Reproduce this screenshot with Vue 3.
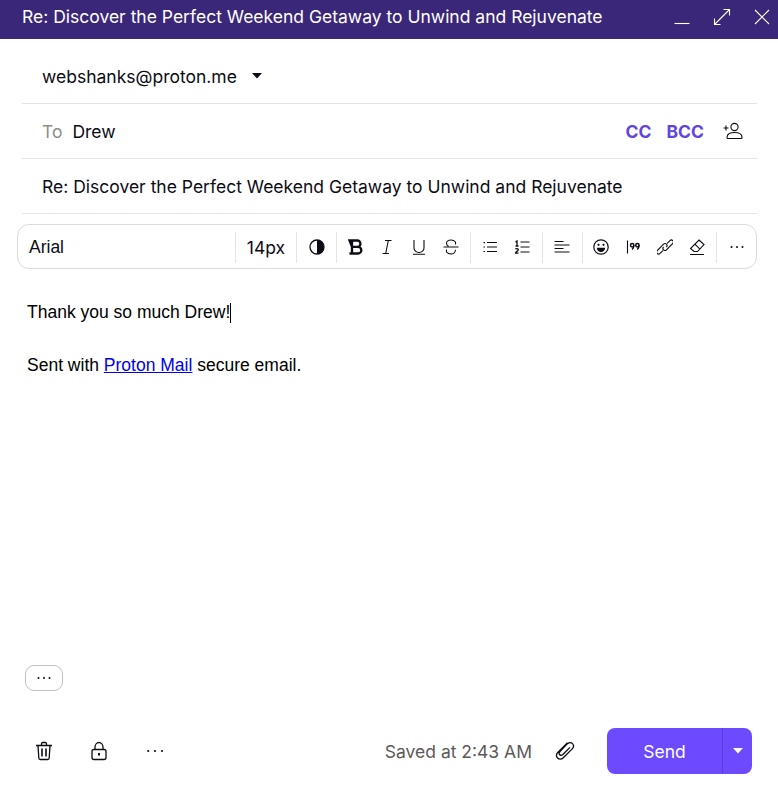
<script setup>
const groups = [
  ['bold', 'italic', 'underline', 'strike'],
  ['bullets', 'numbers'],
  ['align'],
  ['emoji', 'quote', 'link', 'eraser']
]
</script>

<template>
  <div class="composer">
    <header class="titlebar">
      <span class="title">Re: Discover the Perfect Weekend Getaway to Unwind and Rejuvenate</span>
      <div class="window-btns">
        <svg width="18" height="18" viewBox="0 0 18 18"><path d="M1.500 15.500h15" stroke="#fff" stroke-width="1.100" fill="none"/></svg>
        <svg width="18" height="18" viewBox="0 0 18 18" fill="none" stroke="#fff" stroke-width="1.100"><path d="M1.500 16.500 16.500 1.500M10.500 1.500h6v6M1.500 10.500v6h6"/></svg>
        <svg width="18" height="18" viewBox="0 0 18 18" fill="none" stroke="#fff" stroke-width="1.100"><path d="M2 2l14 14M16 2 2 16"/></svg>
      </div>
    </header>

    <div class="fields">
      <div class="row from">
        <span>webshanks@proton.me</span>
        <svg class="caret-down" width="10" height="6" viewBox="0 0 10 6"><path d="M0 0h10L5 5.500z" fill="#0c0c14"/></svg>
      </div>
      <div class="row to">
        <span class="to-label">To</span>
        <span>Drew</span>
        <span class="cc">CC</span>
        <span class="cc bcc">BCC</span>
        <svg class="add-contact" width="20" height="18" viewBox="0 0 20 18" fill="none" stroke="#0c0c14" stroke-width="1.100"><circle cx="11.500" cy="5" r="3.600"/><path d="M4 15.500c0-4 3.500-5 7.500-5s7.500 1 7.500 5c0 .6-.4 1-1 1H5c-.6 0-1-.4-1-1zM.5 6h5M3 3.500v5"/></svg>
      </div>
      <div class="row subject">Re: Discover the Perfect Weekend Getaway to Unwind and Rejuvenate</div>
    </div>

    <div class="toolbar">
      <div class="font-name">Arial</div>
      <div class="font-size">14px</div>
      <div class="contrast">
        <svg width="16" height="16" viewBox="0 0 16 16"><circle cx="8" cy="8" r="7" fill="none" stroke="#0c0c14" stroke-width="1.300"/><path d="M8 1a7 7 0 0 1 0 14z" fill="#0c0c14"/></svg>
      </div>
      <div v-for="(group, i) in groups" :key="i" class="tool-group" :class="{ wide: group.length < 3 }">
        <div v-for="name in group" :key="name" class="tool">
          <svg width="16" height="16" viewBox="0 0 16 16" fill="none" stroke="#0c0c14" stroke-width="1">
            <path v-if="name === 'bold'" stroke-width="2.300" transform="translate(1 0)" d="M1.500 1.500h7.800a3.100 3.100 0 0 1 0 6.300H4zM4 7.800h6a3.300 3.300 0 0 1 0 6.700H1.500M4 1.500v13"/>
            <path v-else-if="name === 'italic'" stroke-width="1.100" d="M6 1.500h6.500M3.500 14.500H10M9.300 1.500 6.700 14.500"/>
            <path v-else-if="name === 'underline'" stroke-width="1.100" d="M3 1v8a5 4.500 0 0 0 10 0V1M2 15.300h12"/>
            <path v-else-if="name === 'strike'" stroke-width="1.100" d="M12.500 5.500V3C11.500 1.800 9.800 1 8 1 5.500 1 3.500 2.300 3.500 4.300c0 1.300.8 2.300 2 2.900M.5 8h15M12.500 10.800c0 2.400-2 4.200-4.500 4.200-2 0-3.500-.8-4.500-2v-2.500"/>
            <g v-else-if="name === 'bullets'">
              <path d="M5 3.500h10M5 8h10M5 12.500h10"/>
              <path d="M1.500 3h1.500v1.200H1.500zM1.500 7.400h1.500v1.200H1.500zM1.500 11.900h1.500v1.200H1.500z" fill="#0c0c14" stroke="none"/>
            </g>
            <g v-else-if="name === 'numbers'">
              <path d="M6.500 3h9M6.500 8h9M6.500 13h9"/>
              <path d="M1.500 3 3 2v5M1.500 7h3M1.500 10.300c.3-1 2.800-1 2.800.4 0 1.400-2.800 2-2.800 3.500h3" stroke-width="1.300"/>
            </g>
            <path v-else-if="name === 'align'" stroke-width="1.100" d="M.5 2.500h9M.5 6h15M.5 9.500h9M.5 13h15"/>
            <g v-else-if="name === 'emoji'">
              <circle cx="8" cy="8" r="7.200" stroke-width="1.200"/>
              <circle cx="5.500" cy="5.800" r="1.100" fill="#0c0c14" stroke="none"/>
              <circle cx="10.500" cy="5.800" r="1.100" fill="#0c0c14" stroke="none"/>
              <path d="M3.800 8.800h8.400c0 2.700-1.900 4.200-4.200 4.200s-4.200-1.500-4.200-4.200z" fill="#0c0c14" stroke="none"/>
            </g>
            <g v-else-if="name === 'quote'">
              <path d="M2.500 1.500v13" stroke-width="1.100"/>
              <circle cx="7.200" cy="6.300" r="1.700" stroke-width="1.500"/>
              <circle cx="12.400" cy="6.300" r="1.700" stroke-width="1.500"/>
              <path d="M8.900 6.300c0 1.800-.6 3-1.800 4.200M14.100 6.300c0 1.800-.6 3-1.800 4.200" stroke-width="1.400"/>
            </g>
            <g v-else-if="name === 'link'" transform="rotate(-45 8 8)">
              <path stroke-width="1.100" d="M4 9H0a2 2 0 0 1 0-4h9a2 2 0 0 1 0 4M12 7h4a2 2 0 0 1 0 4H7a2 2 0 0 1 0-4"/>
            </g>
            <path v-else-if="name === 'eraser'" stroke-width="1.100" d="M1 15.500h14M10 1l5 4.500-6.500 7H5L1.500 9.500zM5.800 5.200l5.200 5"/>
          </svg>
        </div>
      </div>
      <div class="tool-group last">
        <div class="tool">
          <svg width="16" height="16" viewBox="0 0 16 16" fill="#0c0c14"><circle cx="2.500" cy="8" r="1"/><circle cx="8" cy="8" r="1"/><circle cx="13.500" cy="8" r="1"/></svg>
        </div>
      </div>
    </div>

    <main class="editor">
      <p>Thank you so much Drew!<span class="text-cursor"></span></p>
      <p class="signature">Sent with <a href="#">Proton Mail</a> secure email.</p>
      <button class="more-pill">
        <svg width="16" height="16" viewBox="0 0 16 16" fill="#0c0c14"><circle cx="2.500" cy="8" r="1"/><circle cx="8" cy="8" r="1"/><circle cx="13.500" cy="8" r="1"/></svg>
      </button>
    </main>

    <footer class="footer">
      <svg class="foot-icon" width="20" height="20" viewBox="0 0 20 20" fill="none" stroke="#0c0c14" stroke-width="1.300"><path d="M2 4.500h16M4 4.500l.8 12.500c0 1 .7 1.500 1.500 1.500h7.400c.8 0 1.500-.5 1.500-1.500L16 4.500M7.500 4.500V2.800c0-.7.500-1.300 1.300-1.300h2.400c.8 0 1.300.6 1.300 1.300v1.700"/><path d="M8 7.500v8M12 7.500v8" stroke-width="1.600"/></svg>
      <svg class="foot-icon" width="20" height="20" viewBox="0 0 20 20" fill="none" stroke="#0c0c14" stroke-width="1.300"><path d="M6 8.500V6a4 4.500 0 0 1 8 0v2.500M5 8.500h10c1 0 2 .7 2 2v6c0 1-.8 2-2 2H5c-1 0-2-1-2-2v-6c0-1.300 1-2 2-2z"/><path d="M10 12v2.500" stroke-width="2"/></svg>
      <svg class="foot-icon" width="20" height="20" viewBox="0 0 20 20" fill="#0c0c14"><circle cx="4.200" cy="10" r="1.100"/><circle cx="11" cy="10" r="1.100"/><circle cx="18" cy="10" r="1.100"/></svg>
      <span class="saved">Saved at 2:43 AM</span>
      <svg class="clip" width="20" height="20" viewBox="0 0 20 20" fill="none" stroke="#0c0c14" stroke-width="1.300"><path d="M12.500 1.800 3 11.300c-2 2-1.800 4.200-.4 5.700s3.800 1.700 5.700-.2l8.700-8.700c2-2 2-4 .5-5.500s-3.600-1.400-5.500.5L5 10.600c-1.100 1.200-1.100 2.400-.3 3.200s2 .8 3.200-.3L15 6.400"/></svg>
      <div class="send">
        <span class="send-label">Send</span>
        <span class="send-arrow">
          <svg width="10" height="6" viewBox="0 0 10 6"><path d="M0 0h10L5 5.500z" fill="#fff"/></svg>
        </span>
      </div>
    </footer>
  </div>
</template>

<style scoped>
.composer {
  width: 778px;
  height: 785px;
  display: flex;
  flex-direction: column;
  background: #fff;
  font-family: Inter, "Liberation Sans", sans-serif;
  font-size: 17.5px;
  color: #0c0c14;
  overflow: hidden;
}
.titlebar {
  height: 39px;
  flex: none;
  display: flex;
  align-items: center;
  justify-content: space-between;
  padding: 0 7px 5px 22px;
  box-sizing: border-box;
  background: #3b2779;
  color: #fff;
}
.title {
  margin-top: -1px;
}
.window-btns {
  display: flex;
  gap: 22px;
}
.fields {
  margin: 0 21px 0 22px;
}
.row {
  height: 55px;
  display: flex;
  align-items: center;
  padding-left: 20px;
  box-sizing: border-box;
  border-bottom: 1px solid #e5e4e2;
}
.from {
  height: 65px;
  padding-top: 10px;
}
.caret-down {
  margin-left: 15px;
}
.to-label {
  color: #8f8d8a;
  margin-right: 10px;
}
.cc {
  margin-left: auto;
  color: #6243e6;
  font-weight: 700;
}
.bcc {
  margin-left: 15px;
}
.add-contact {
  margin: 0 14px 0 19px;
}
.toolbar {
  height: 45px;
  flex: none;
  margin: 10px 21px 0 17px;
  padding-top: 1px;
  box-sizing: border-box;
  display: flex;
  align-items: center;
  border: 1px solid #dedcd9;
  border-radius: 12px;
}
.font-name {
  width: 217px;
  padding-left: 11px;
  box-sizing: border-box;
  font-family: "Liberation Sans", Arial, sans-serif;
}
.font-size,
.contrast,
.tool-group {
  height: 31px;
  display: flex;
  align-items: center;
  border-left: 1px solid #e5e4e2;
}
.font-size {
  width: 60px;
  justify-content: center;
}
.contrast {
  width: 39px;
  justify-content: center;
}
.tool-group {
  padding: 0 3px 0 2px;
}
.tool-group.wide {
  padding: 0 4px 0 3px;
}
.tool {
  width: 32px;
  display: flex;
  justify-content: center;
}
.tool-group.last {
  padding: 0 3px 0 4px;
}
.editor {
  flex: 1;
  padding: 33px 27px 0;
  display: flex;
  flex-direction: column;
  align-items: flex-start;
  font-family: "Liberation Sans", Arial, sans-serif;
  font-size: 17.5px;
  line-height: 20px;
  color: #000;
}
.editor p {
  margin: 0;
}
.signature {
  margin-top: 32px !important;
}
.editor a {
  color: #0000ee;
}
.text-cursor {
  display: inline-block;
  width: 1px;
  height: 20px;
  background: #000;
  vertical-align: -5px;
}
.more-pill {
  margin: auto 0 0 -2px;
  width: 38px;
  height: 26px;
  padding: 0;
  display: flex;
  align-items: center;
  justify-content: center;
  background: #fff;
  border: 1px solid #c4c2bf;
  border-radius: 9px;
}
.footer {
  flex: none;
  height: 94px;
  padding: 37px 26px 11px 34px;
  box-sizing: border-box;
  display: flex;
  align-items: center;
}
.foot-icon {
  margin-right: 35px;
}
.saved {
  margin-left: auto;
  color: #5c5958;
}
.clip {
  margin: 0 32px 0 23px;
}
.send {
  width: 145px;
  height: 46px;
  display: flex;
  border-radius: 8px;
  background: #6d4aff;
  color: #fff;
}
.send-label {
  flex: 1;
  display: flex;
  align-items: center;
  justify-content: center;
}
.send-arrow {
  width: 29px;
  display: flex;
  align-items: center;
  justify-content: center;
  border-left: 1px solid #5a3bdb;
}
</style>
